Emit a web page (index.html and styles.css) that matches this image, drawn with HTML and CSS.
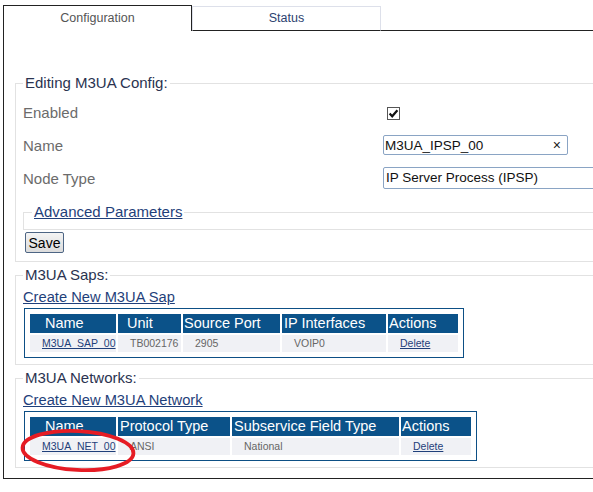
FILE: index.html
```html
<!DOCTYPE html>
<html>
<head>
<meta charset="utf-8">
<link rel="stylesheet" href="styles.css">
</head>
<body>
<div class="tabs">
  <div class="tab tab-active">Configuration</div>
  <div class="tab tab-idle">Status</div>
  <div class="tab-fill"></div>
</div>
<div class="panel">
  <fieldset class="group group-edit">
    <legend>Editing M3UA Config:</legend>
    <div class="form">
      <span class="label">Enabled</span>
      <span class="check"><svg width="13" height="13" viewBox="0 0 13 13"><rect x="0.5" y="0.5" width="12" height="12" fill="#fff" stroke="#555"/><path d="M2.6 6.6 L5.2 9.3 L10.4 3.2" fill="none" stroke="#111" stroke-width="2.2"/></svg></span>
      <span class="label">Name</span>
      <div class="text-input"><span>M3UA_IPSP_00</span><span class="clear">×</span></div>
      <span class="label">Node Type</span>
      <div class="select">IP Server Process (IPSP)</div>
    </div>
    <fieldset class="adv">
      <legend><a href="#" class="link">Advanced Parameters</a></legend>
    </fieldset>
    <button class="save">Save</button>
  </fieldset>

  <fieldset class="group">
    <legend>M3UA Saps:</legend>
    <a href="#" class="link create">Create New M3UA Sap</a>
    <div class="grid-box">
      <table class="grid grid-saps">
        <colgroup><col class="w86"><col class="w63"><col class="w97"><col class="w104"><col class="w70"></colgroup>
        <tr><th class="p15">Name</th><th class="p9">Unit</th><th class="p1">Source Port</th><th class="p2">IP Interfaces</th><th class="p1">Actions</th></tr>
        <tr><td><a href="#" class="link">M3UA_SAP_00</a></td><td>TB002176</td><td>2905</td><td>VOIP0</td><td><a href="#" class="link">Delete</a></td></tr>
      </table>
    </div>
  </fieldset>

  <fieldset class="group">
    <legend>M3UA Networks:</legend>
    <a href="#" class="link create">Create New M3UA Network</a>
    <div class="grid-box">
      <table class="grid grid-nets">
        <colgroup><col class="w86"><col class="w112"><col class="w167"><col class="w70"></colgroup>
        <tr><th class="p15">Name</th><th class="p2">Protocol Type</th><th class="p2">Subservice Field Type</th><th class="p1">Actions</th></tr>
        <tr><td><a href="#" class="link">M3UA_NET_00</a></td><td>ANSI</td><td>National</td><td><a href="#" class="link">Delete</a></td></tr>
      </table>
    </div>
  </fieldset>
</div>
<svg class="annotation" width="593" height="492" viewBox="0 0 593 492"><ellipse cx="78" cy="450.5" rx="55.5" ry="19.5" fill="none" stroke="#e61c24" stroke-width="3.8" transform="rotate(3 78 450.5)"/></svg>
</body>
</html>
```
FILE: styles.css
```css
html, body {
  margin: 0;
  padding: 0;
  overflow: hidden;
  background: #fff;
}
body {
  font-family: "Liberation Sans", Arial, sans-serif;
  position: relative;
  width: 593px;
  height: 492px;
}
.tabs {
  display: flex;
  align-items: flex-start;
  padding-top: 5px;
  margin-left: 3px;
  width: 700px;
}
.tab {
  box-sizing: border-box;
  width: 189px;
  text-align: center;
  font-size: 12.5px;
  line-height: 15px;
}
.tab-active {
  height: 26px;
  border: 1px solid #222;
  border-bottom: none;
  padding-top: 5px;
  color: #555;
}
.tab-idle {
  margin-top: 1px;
  height: 25px;
  border: 1px solid #dde0ea;
  border-bottom: 1px solid #222;
  padding-top: 4px;
  color: #2c4270;
}
.tab-fill {
  flex: 1;
  height: 26px;
  box-sizing: border-box;
  border-bottom: 1px solid #222;
}
.panel {
  margin-left: 3px;
  width: 700px;
  border-left: 1px solid #222;
  border-bottom: 1px solid #222;
  padding: 44px 0 10px 11px;
}
.group {
  margin: 5px 0 0 0;
  padding: 6px 0 6px 7px;
  border: 1px solid #e2e2e2;
  min-inline-size: 0;
}
.group-edit {
  margin-top: 0;
  padding: 10px 0 8px 7px;
}
.group > legend {
  padding: 0 2px;
  font-size: 15px;
  line-height: 16px;
  color: #2a3350;
}
.form {
  display: grid;
  grid-template-columns: 360px auto;
  grid-auto-rows: 22px;
  row-gap: 11px;
  align-items: center;
}
.label {
  font-size: 15px;
  color: #6b6b6b;
}
.check {
  display: flex;
  margin: 3px 0 0 4px;
  height: 13px;
}
.text-input {
  box-sizing: border-box;
  width: 185px;
  height: 20px;
  border: 1px solid #8aa4c4;
  border-radius: 2px;
  display: flex;
  justify-content: space-between;
  align-items: center;
  padding: 0 6px 0 1px;
  font-size: 13.5px;
  color: #111;
}
.clear {
  font-size: 14px;
  color: #222;
}
.select {
  box-sizing: border-box;
  width: 240px;
  height: 22px;
  border: 1px solid #8aa4c4;
  border-radius: 2px;
  padding: 0 2px;
  font-size: 13.5px;
  line-height: 20px;
  color: #111;
}
.adv {
  margin: 15px 0 0 0;
  padding: 0 0 9px 8px;
  border: 1px solid #e2e2e2;
  min-inline-size: 0;
}
.adv > legend {
  padding: 0 2px;
  font-size: 15px;
  line-height: 16px;
}
.link {
  color: #1f3f7a;
  text-decoration: underline;
}
.save {
  display: block;
  margin: 2px 0 0 2px;
  width: 39px;
  height: 21px;
  padding: 0;
  border: 1px solid #4d6584;
  border-radius: 2px;
  background: linear-gradient(#f4f4f4, #dcdcdc);
  font-family: "Liberation Sans", Arial, sans-serif;
  font-size: 14px;
  color: #000;
}
.create {
  display: block;
  width: max-content;
  font-size: 14.7px;
  line-height: 16px;
  margin-bottom: 3px;
}
.grid-box {
  display: inline-block;
  vertical-align: top;
  margin-left: 1px;
  border: 1px solid #0d4f85;
  padding: 3px;
}
.grid {
  table-layout: fixed;
  border-collapse: separate;
  border-spacing: 2px;
}
.grid-saps { width: 432px; }
.grid-nets { width: 445px; }
.w63 { width: 63px; }
.w70 { width: 70px; }
.w86 { width: 86px; }
.w97 { width: 97px; }
.w104 { width: 104px; }
.w112 { width: 112px; }
.w167 { width: 167px; }
.grid th {
  height: 19px;
  padding: 0;
  background: #0b5289;
  color: #fff;
  font-weight: normal;
  text-align: left;
  font-size: 14.5px;
  line-height: 19px;
  white-space: nowrap;
  overflow: hidden;
}
.grid th.p1 { padding-left: 1px; }
.grid th.p2 { padding-left: 2px; }
.grid th.p9 { padding-left: 9px; }
.grid th.p15 { padding-left: 15px; }
.grid td {
  height: 17px;
  padding: 0 0 0 12px;
  background: #f0f1f5;
  color: #666;
  font-size: 10.5px;
  line-height: 17px;
  white-space: nowrap;
}
.annotation {
  position: absolute;
  left: 0;
  top: 0;
  pointer-events: none;
}
```
